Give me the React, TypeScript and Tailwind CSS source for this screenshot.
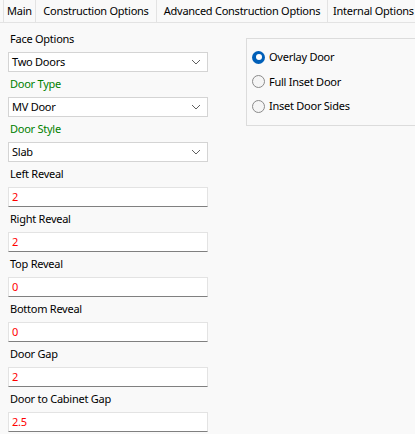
import React from "react";

const font = { fontFamily: '"Segoe UI", "Noto Sans", "Liberation Sans", sans-serif', letterSpacing: "-0.25px" };

function Chevron() {
  return (
    <svg width="10" height="6" viewBox="0 0 10 6" className="shrink-0">
      <path d="M1 1 L5 5 L9 1" fill="none" stroke="#606060" strokeWidth="1" />
    </svg>
  );
}

function Combo({ value }: { value: string }) {
  return (
    <div className="flex h-[20px] w-[200px] items-center justify-between border border-[#d4d4d4] bg-white pl-[3px] pr-[6px] text-black">
      <span>{value}</span>
      <Chevron />
    </div>
  );
}

function Field({ value }: { value: string }) {
  return (
    <div className="flex h-[20px] w-[200px] items-center border border-[#e3e3e3] border-b-[#808080] bg-white pl-[3px] text-[#ff0000]">
      {value}
    </div>
  );
}

function Label({ text, green }: { text: string; green?: boolean }) {
  return (
    <div className={`h-[25px] pl-[2px] pt-[4px] leading-[15px] ${green ? "text-[#008000]" : "text-black"}`}>
      {text}
    </div>
  );
}

function Radio({ label, checked }: { label: string; checked?: boolean }) {
  return (
    <div className="flex h-[24.5px] items-center gap-[4px]">
      {checked ? (
        <span className="flex h-[13px] w-[13px] items-center justify-center rounded-full bg-[#005fb8]">
          <span className="h-[6px] w-[6px] rounded-full bg-white" />
        </span>
      ) : (
        <span className="h-[13px] w-[13px] rounded-full border border-[#8a8a8a] bg-[#f5f5f5]" />
      )}
      <span className="text-black">{label}</span>
    </div>
  );
}

const tabs = [
  { t: "Main", w: "w-[33px]" },
  { t: "Construction Options", w: "w-[121px]" },
  { t: "Advanced Construction Options", w: "w-[171px]" },
  { t: "Internal Options", w: "w-[92px]" },
];

export default function App() {
  return (
    <div style={font} className="h-[434px] w-[415px] overflow-hidden bg-[#f9f9f9] text-[11px]">
      <div className="flex h-[23px] border-b border-[#e3e3e3] bg-[#f9f9f9] pl-[3px]">
        {tabs.map((x, i) => (
          <div
            key={x.t}
            className={`flex h-[22px] shrink-0 items-center justify-center whitespace-nowrap border-r border-[#e3e3e3] text-black ${x.w} ${
              i === 0 ? "border-l" : ""
            }`}
          >
            {x.t}
          </div>
        ))}
      </div>
      <div className="flex">
        <div className="flex w-[246px] shrink-0 flex-col pl-[8px] pt-[4px]">
          <Label text="Face Options" />
          <Combo value="Two Doors" />
          <Label text="Door Type" green />
          <Combo value="MV Door" />
          <Label text="Door Style" green />
          <Combo value="Slab" />
          <Label text="Left Reveal" />
          <Field value="2" />
          <Label text="Right Reveal" />
          <Field value="2" />
          <Label text="Top Reveal" />
          <Field value="0" />
          <Label text="Bottom Reveal" />
          <Field value="0" />
          <Label text="Door Gap" />
          <Field value="2" />
          <Label text="Door to Cabinet Gap" />
          <Field value="2.5" />
        </div>
        <div className="pt-[15px]">
          <div className="h-[88px] w-[180px] border border-[#dcdcdc] pl-[5px] pt-[6px]">
            <Radio label="Overlay Door" checked />
            <Radio label="Full Inset Door" />
            <Radio label="Inset Door Sides" />
          </div>
        </div>
      </div>
    </div>
  );
}
